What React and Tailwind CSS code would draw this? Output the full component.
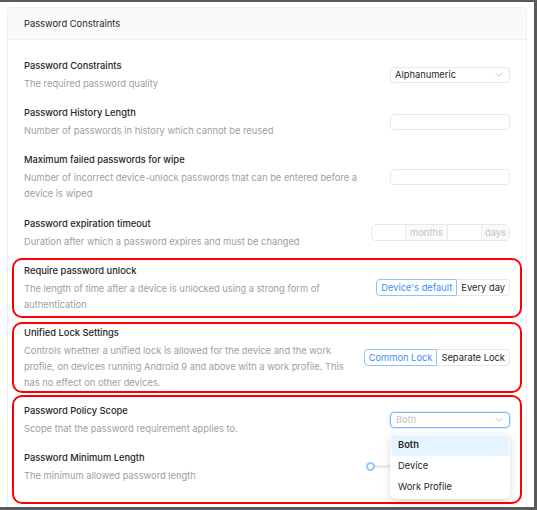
import React from 'react';

const Chevron = ({ className = '' }) => (
  <svg width="8" height="5" viewBox="0 0 8 5" className={className} fill="none">
    <path d="M0.6 0.7 L4 4.1 L7.4 0.7" stroke="#c4c4c4" strokeWidth="0.9" />
  </svg>
);

const Row = ({ title, desc, children }) => (
  <div className="flex items-center justify-between">
    <div className="w-[335px]">
      <div className="leading-[18px] font-medium text-[#262626]">{title}</div>
      <div className="mt-px leading-[16px] text-[#9e9e9e]">{desc}</div>
    </div>
    {children}
  </div>
);

const TextInput = () => (
  <div className="w-[120px] h-4 rounded-[4px] border border-[#e8e8e8] bg-white" />
);

const Segmented = ({ active, other }) => (
  <div className="flex h-[17px]">
    <div className="flex items-center px-[4px] rounded-l-[4px] border border-[#91c3fb] text-[#3d8ff6]">{active}</div>
    <div className="flex items-center px-[4px] rounded-r-[4px] border border-l-0 border-[#e8e8e8] text-[#262626]">{other}</div>
  </div>
);

export default function App() {
  return (
    <div className="w-[537px] h-[510px] overflow-hidden bg-white border-t-2 border-r-[3px] border-b-[3px] border-[#5a5a5a] font-[Inter,sans-serif] text-[9.33px] text-[#262626]">
      <div className="mx-[7px] mt-[5px] rounded-[5px] border border-[#f0f0f0] bg-white">
        <div className="h-[32px] px-4 pt-px flex items-center bg-[#fafafa] border-b border-[#f0f0f0] rounded-t-[5px]">
          Password Constraints
        </div>

        <div className="px-4 pt-[17px] pb-8 flex flex-col gap-3">
          <Row title="Password Constraints" desc="The required password quality">
            <div className="w-[120px] h-4 rounded-[4px] border border-[#e8e8e8] flex items-center justify-between pl-[4px] pr-[6px]">
              <span>Alphanumeric</span>
              <Chevron />
            </div>
          </Row>

          <Row title="Password History Length" desc="Number of passwords in history which cannot be reused">
            <TextInput />
          </Row>

          <Row
            title="Maximum failed passwords for wipe"
            desc="Number of incorrect device-unlock passwords that can be entered before a device is wiped"
          >
            <TextInput />
          </Row>

          <div className="mt-px">
            <Row title="Password expiration timeout" desc="Duration after which a password expires and must be changed">
              <div className="flex h-[17px] w-[139px] rounded-[5px] border border-[#e8e8e8] overflow-hidden text-[#c2c2c2]">
                <div className="w-[33px] bg-white" />
                <div className="w-[43px] flex items-center justify-center bg-[#fafafa] border-x border-[#e8e8e8]">months</div>
                <div className="w-[33px] bg-white" />
                <div className="flex-1 flex items-center justify-center bg-[#fafafa] border-l border-[#e8e8e8]">days</div>
              </div>
            </Row>
          </div>

          <div className="-mx-3 px-2.5 -mt-[4px] pt-[2px] pb-[3px] -mb-[8px] border-2 border-[#ff0000] rounded-[10px]">
            <Row
              title="Require password unlock"
              desc="The length of time after a device is unlocked using a strong form of authentication"
            >
              <Segmented active="Device's default" other="Every day" />
            </Row>
          </div>

          <div className="-mx-3 px-2.5 -mb-[10px] border-2 border-[#ff0000] rounded-[10px]">
            <Row
              title="Unified Lock Settings"
              desc="Controls whether a unified lock is allowed for the device and the work profile, on devices running Android 9 and above with a work profile. This has no effect on other devices."
            >
              <Segmented active="Common Lock" other="Separate Lock" />
            </Row>
          </div>

          <div className="-mx-3 px-2.5 pt-[5px] pb-[18px] border-2 border-[#ff0000] rounded-[10px] flex flex-col gap-3">
            <Row title="Password Policy Scope" desc="Scope that the password requirement applies to.">
              <div className="relative w-[120px]">
                <div className="h-4 rounded-[4px] border border-[#7db6fa] shadow-[0_0_0_1px_rgba(5,145,255,0.15)] flex items-center justify-between pl-[5px] pr-[6px] text-[#c4c4c4]">
                  <span>Both</span>
                  <Chevron />
                </div>
                <div className="absolute left-0 right-0 top-[22px] z-10 rounded-[5px] bg-white p-[1px] shadow-[0_3px_10px_rgba(0,0,0,0.12),0_1px_3px_rgba(0,0,0,0.08)]">
                  <div className="h-[21px] flex items-center px-[7px] rounded-[3px] bg-[#e6f4ff] font-semibold">Both</div>
                  <div className="h-[21px] flex items-center px-[7px]">Device</div>
                  <div className="h-[21px] flex items-center px-[7px]">Work Profile</div>
                </div>
              </div>
            </Row>

            <Row title="Password Minimum Length" desc="The minimum allowed password length">
              <div className="relative w-[144px] h-[10px] flex items-center">
                <div className="absolute left-0 right-0 h-[3px] rounded-full bg-[#ebebeb]" />
                <div className="relative w-[9px] h-[9px] rounded-full border-2 border-[#91caff] bg-white" />
              </div>
            </Row>
          </div>
        </div>
      </div>
    </div>
  );
}
